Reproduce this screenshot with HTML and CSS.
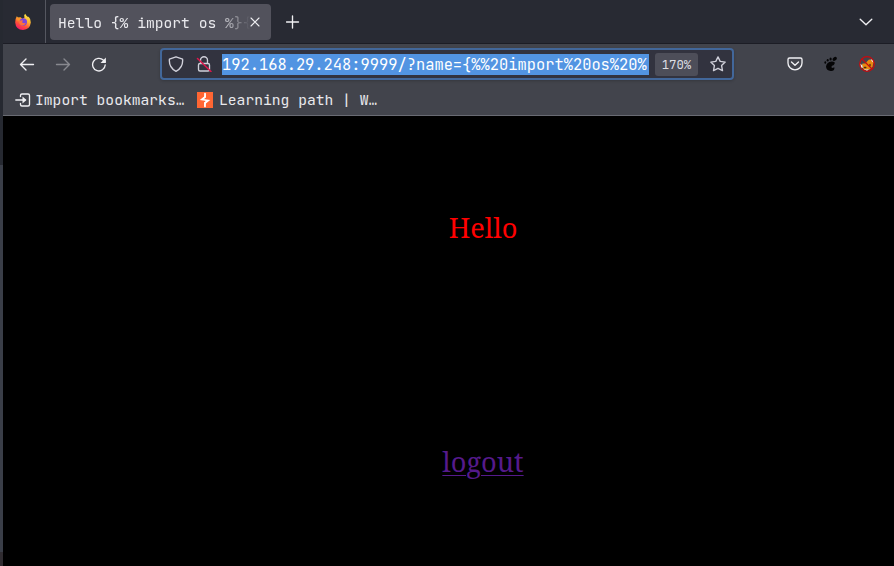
FILE: index.html
```
<!DOCTYPE html>
<html lang="en">
<head>
<meta charset="utf-8">
<title>Hello</title>
<link rel="stylesheet" href="styles.css">
</head>
<body>
<div class="edge"></div>
<div class="browser">
  <header class="tabs">
    <div class="pinned">
      <svg width="18" height="18" viewBox="0 0 18 18">
        <defs>
          <linearGradient id="fire" x1=".8" y1="0" x2=".3" y2="1"><stop offset="0" stop-color="#fff04a"/><stop offset=".4" stop-color="#ffb02e"/><stop offset=".7" stop-color="#ff5038"/><stop offset="1" stop-color="#f5156c"/></linearGradient>
        </defs>
        <path d="M2.8 3.2 4 4.6 6.5 4.5 8.5 6 10.5 4.5Q9.5 2 11.2.8 11.8 2.6 14.2 4.3L14.5 3.5Q17 6 16.8 9.6 16 16.7 9 17 1.8 16.6 1.2 9.4 1.2 5.6 2.8 3.2Z" fill="url(#fire)"/>
        <path d="M4 4.8 7 4.5 8.5 6.2 6 8 3 7Z" fill="#ff9527"/>
        <circle cx="9.3" cy="9" r="3.7" fill="#7b45dc"/>
        <path d="M4.8 8.2Q7 7 9 7.4L8 9.2Q9.8 11 12 9.8 10.5 13 7.6 12.4 4.8 11.3 4.8 8.2Z" fill="#ff7139"/>
      </svg>
    </div>
    <div class="tab">
      <span class="tab-title">Hello {% import os %}{</span>
      <svg class="close" width="10" height="10" viewBox="0 0 10 10"><path d="m1 1 8 8M9 1 1 9"/></svg>
    </div>
    <svg class="plus" width="14" height="14" viewBox="0 0 14 14"><path d="M6.500 1v12M.5 7h12"/></svg>
    <svg class="chevron" width="14" height="8" viewBox="0 0 14 8"><path d="m1.2 1.2 5.8 5.6 5.8-5.6"/></svg>
  </header>

  <nav class="toolbar">
    <svg class="back" width="16" height="16" viewBox="0 0 16 16"><path d="M14.500 8.500H1.500M7 3 1.500 8.500 7 14"/></svg>
    <svg class="forward" width="16" height="16" viewBox="0 0 16 16"><path d="M1.500 8.500h13M9 3 14.500 8.500 9 14"/></svg>
    <svg class="reload" width="16" height="16" viewBox="0 0 16 16"><path d="M14.200 9A6.300 6.300 0 1 1 12.300 4.100L14 5.500"/><path class="solid" d="M14.900 1.500v5.500H9.500Z"/></svg>
    <div class="urlbar">
      <svg class="shield" width="16" height="16" viewBox="0 0 16 16"><path d="M8 .8 14.600 3.200Q15.300 11.600 8 15.300 .7 11.600 1.400 3.200Z"/></svg>
      <svg class="lock" width="16" height="16" viewBox="0 0 16 16"><path d="M4.500 7.500V4.200a3.500 3.500 0 0 1 7 0V7.500M4 7.500h8q1.500 0 1.500 1.500v4.500q0 1.500-1.500 1.500H4q-1.500 0-1.500-1.500V9Q2.500 7.500 4 7.500Z"/><path class="slash" d="m1.500 2.500 13.500 13"/></svg>
      <span class="url">192.168.29.248:9999/?name={%%20import%20os%20%</span>
      <span class="zoom">170%</span>
      <svg class="star" width="16" height="16" viewBox="0 0 16 16"><path d="m8 .9 2.200 4.500 5 .7-3.600 3.500.9 5L8 12.300l-4.500 2.300.9-5L.8 6.100l5-.7Z"/></svg>
    </div>
    <svg class="pocket" width="16" height="16" viewBox="0 0 16 16"><path d="M2.500 2h11Q15 2 15 3.500V7A7 6.800 0 0 1 1 7V3.500Q1 2 2.500 2ZM4.500 6 8 9.300 11.500 6"/></svg>
    <svg class="foot" width="16" height="16" viewBox="0 0 16 16"><path d="M8.500 5.400Q12.400 5.200 11.600 7.700 10.700 9.600 9 9.800 7.800 11.300 9 12 10.500 11.200 11.500 11.500 11.500 15.200 7.800 15 3.200 14.500 3 10.500 3.700 5.600 8.500 5.400Z"/><ellipse cx="11.700" cy="2.900" rx="2.400" ry="1.700" transform="rotate(-35 11.700 2.900)"/><ellipse cx="7.600" cy="2.900" rx="1.100" ry="1.500"/><ellipse cx="4.700" cy="4.300" rx="1" ry="1.300"/><ellipse cx="2.300" cy="6.500" rx=".9" ry="1.200"/></svg>
    <svg class="fox" width="16" height="16" viewBox="0 0 16 16">
      <path d="M3 8 4 7.500 6.500 7.500 8 5.500 10 3.500 12.500 4 15 5 14 8.500 13.500 11 10.500 13.500 5 14 3.500 11Z" fill="#e8880f"/>
      <path d="m1 7.500 2.500 2 .3 2.500-1.800-.5ZM11.500 3l2.500 1 .8 3-1.800-1.500ZM4.500 12.800l2.500.8 3-.3-2 1.700Z" fill="#f2e9df"/>
      <path d="M5.500 11.500h1.300M11 8.500v1.300" stroke="#4b2c16"/>
      <circle cx="8" cy="8" r="7.300" fill="none" stroke="#c90a0e" stroke-width="1.200"/>
      <path d="m3 3 10 10" stroke="#c90a0e" stroke-width="1.100"/>
    </svg>
  </nav>

  <div class="bookmarks">
    <svg class="import" width="16" height="16" viewBox="0 0 16 16"><path d="M5.500 4.500V3.500q0-1.500 1.500-1.500h6q1.500 0 1.500 1.500v9q0 1.500-1.500 1.500H7q-1.500 0-1.500-1.500v-1M.8 8H10"/><path class="solid" d="M7.500 4.500 11.500 8l-4 3.500Z"/></svg>
    <span class="bookmark first">Import bookmarks…</span>
    <svg class="burp" width="16" height="16" viewBox="0 0 16 16"><path d="M0 0h16v16H0Z" fill="#ff6633"/><path d="M8.800 1v4.300L6.200 7.500 10 9 7.200 15V10.600L9.800 8.400 6 7Z" fill="#fff"/><path d="M8 1.500V5L4.800 7.500 11.200 8.500 8 11v3.500" fill="none" stroke="#fff" stroke-width="1.700" stroke-linejoin="miter"/></svg>
    <span class="bookmark">Learning path | W…</span>
  </div>

  <main class="page">
    <p class="hello">Hello</p>
    <a class="logout" href="#">logout</a>
  </main>
</div>
</body>
</html>
```
FILE: styles.css
```
* { box-sizing: border-box; }
body {
  margin: 0;
  width: 894px;
  height: 566px;
  display: flex;
  overflow: hidden;
  background: #000;
  color: #e9e9ed;
  font-family: "JetBrains Mono", "DejaVu Sans Mono", monospace;
  font-size: 14.667px;
}
svg { display: block; flex: none; fill: none; stroke: #f0f0f3; stroke-width: 1.35; stroke-linecap: round; stroke-linejoin: round; }
.solid { fill: #f0f0f3; stroke: none; }
.edge { width: 3px; background: linear-gradient(#262931 0 165px, #3a3e48 165px 552px, #302c31 552px); }
.browser { width: 891px; display: flex; flex-direction: column; }
.tabs { height: 44px; display: flex; align-items: center; background: #282a33; border-bottom: 1px solid #1c1d25; }
.pinned { width: 43px; height: 43px; padding: 13px 0 0 11px; border-right: 1px solid #555760; }
.pinned svg, .fox, .burp { stroke: none; }
.tab { width: 221px; height: 36px; margin-left: 4px; padding: 0 11px 0 8px; display: flex; align-items: center; border-radius: 4px; background: #52525c; }
.tab-title {
  width: 192px;
  white-space: pre;
  line-height: 20px;
  padding-top: 2px;
  -webkit-mask-image: linear-gradient(90deg, #000 158px, transparent 192px);
  mask-image: linear-gradient(90deg, #000 158px, transparent 192px);
}
.close { stroke-width: 1.1; }
.plus { margin-left: 15px; }
.chevron { margin-left: auto; margin-right: 21px; }
.toolbar { height: 41px; display: flex; align-items: center; background: #42444c; }
.toolbar > svg { margin-bottom: 1px; }
.back { margin-left: 16px; }
.forward { margin-left: 20px; opacity: .4; }
.reload { margin-left: 20px; }
.urlbar { width: 574px; height: 32px; margin-left: 53px; margin-bottom: 1px; padding-left: 6px; display: flex; align-items: center; border: 2px solid #42679a; border-radius: 4px; background: #32333f; box-shadow: 0 1px 3px #0003; }
.lock { margin-left: 12px; }
.shield, .lock, .star { stroke: #d0d0da; }
.lock .slash { stroke: #df174c; stroke-width: 1.5; }
.url { width: 427px; height: 21px; margin-left: 10px; margin-top: 1px; white-space: pre; background: #5294e2; color: #fff; font-size: 15.4px; line-height: 21px; }
.zoom { width: 43px; height: 23px; margin-left: 6px; margin-top: 1px; border-radius: 3px; background: #4d4e59; color: #dedee4; font-size: 12.3px; line-height: 23px; text-align: center; }
.star { margin-left: 12px; }
.pocket { margin-left: 53px; }
.foot { margin-left: 20px; fill: #050506; stroke: none; }
.fox { margin-left: 20px; }
.bookmarks { height: 31px; padding-left: 12px; display: flex; align-items: center; background: #42444c; border-bottom: 1px solid #696b73; }
.bookmark { margin-left: 6px; line-height: 20px; white-space: pre; }
.first { width: 150px; margin-left: 4px; }
.burp { margin-left: 12px; }
.page { flex: 1; padding-left: 69px; display: flex; flex-direction: column; align-items: center; font-family: "Noto Serif", "DejaVu Serif Condensed", "DejaVu Serif", serif; font-size: 27.2px; line-height: 38px; }
.hello { margin: 93px 0 196px; color: #f00; }
.logout { color: #551a8b; text-decoration-thickness: 1px; text-underline-offset: 3px; }
```
